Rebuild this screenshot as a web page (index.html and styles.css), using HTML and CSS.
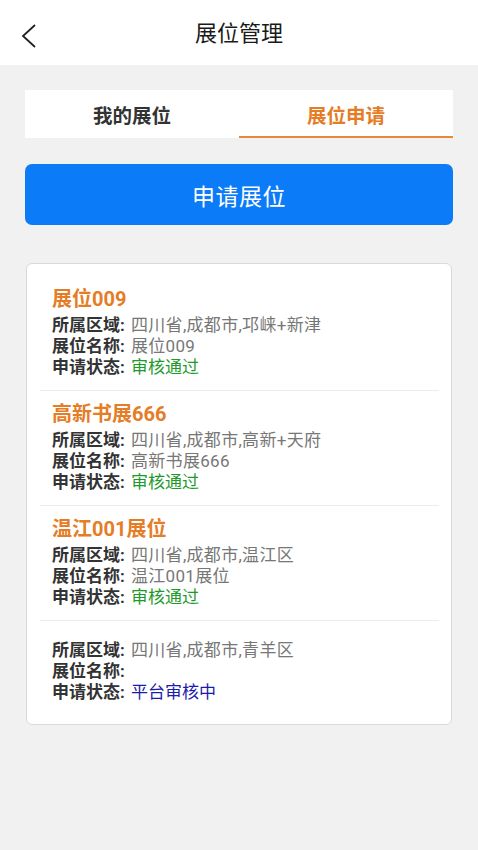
FILE: index.html
```html
<!DOCTYPE html>
<html lang="zh-CN">
<head>
<meta charset="utf-8">
<title>展位管理</title>
<link rel="stylesheet" href="styles.css">
</head>
<body>
<header class="topbar">
  <svg class="back" width="16" height="24" viewBox="0 0 16 24"><path d="M14 1 L2 12 L14 23" fill="none" stroke="#222" stroke-width="1.8"/></svg>
  <h1 class="title">展位管理</h1>
</header>
<main class="content">
  <div class="tabs">
    <div class="tab">我的展位</div>
    <div class="tab active">展位申请</div>
  </div>
  <button class="apply">申请展位</button>
  <div class="card">
    <div class="item">
      <div class="item-title">展位009</div>
      <div class="row"><b>所属区域:</b> <span class="val">四川省,成都市,邛崃+新津</span></div>
      <div class="row"><b>展位名称:</b> <span class="val">展位009</span></div>
      <div class="row"><b>申请状态:</b> <span class="ok">审核通过</span></div>
    </div>
    <div class="item">
      <div class="item-title">高新书展666</div>
      <div class="row"><b>所属区域:</b> <span class="val">四川省,成都市,高新+天府</span></div>
      <div class="row"><b>展位名称:</b> <span class="val">高新书展666</span></div>
      <div class="row"><b>申请状态:</b> <span class="ok">审核通过</span></div>
    </div>
    <div class="item">
      <div class="item-title">温江001展位</div>
      <div class="row"><b>所属区域:</b> <span class="val">四川省,成都市,温江区</span></div>
      <div class="row"><b>展位名称:</b> <span class="val">温江001展位</span></div>
      <div class="row"><b>申请状态:</b> <span class="ok">审核通过</span></div>
    </div>
    <div class="item notitle">
      <div class="row"><b>所属区域:</b> <span class="val">四川省,成都市,青羊区</span></div>
      <div class="row"><b>展位名称:</b> <span class="val"></span></div>
      <div class="row"><b>申请状态:</b> <span class="pending">平台审核中</span></div>
    </div>
  </div>
</main>
</body>
</html>
```
FILE: styles.css
```css
html, body {
  margin: 0;
  padding: 0;
}
body {
  background: #f1f1f1;
  font-family: Roboto, "Noto Sans CJK SC", sans-serif;
  width: 478px;
  height: 850px;
  color: #222;
}
.topbar {
  position: relative;
  height: 65px;
  background: #fff;
  display: flex;
  align-items: center;
  justify-content: center;
}
.back {
  position: absolute;
  left: 21px;
  top: 24px;
}
.title {
  margin: 0;
  font-size: 22px;
  font-weight: 400;
  color: #1a1a1a;
  line-height: 30px;
  padding-top: 2px;
}
.content {
  padding: 25px 25px 0 25px;
}
.tabs {
  display: flex;
  background: #fff;
  height: 48px;
}
.tab {
  flex: 1;
  display: flex;
  align-items: center;
  justify-content: center;
  font-size: 19.5px;
  font-weight: 700;
  color: #333;
  box-sizing: border-box;
}
.tab.active {
  color: #e57c26;
  border-bottom: 2px solid #e8893a;
  padding-top: 2px;
}
.apply {
  display: block;
  width: 100%;
  margin-top: 26px;
  height: 61px;
  border: none;
  border-radius: 7px;
  background: #0b7bf7;
  color: #fff;
  font-family: inherit;
  font-size: 23px;
  letter-spacing: 0.5px;
}
.card {
  margin: 38px 1px 0 1px;
  background: #fff;
  border: 1.5px solid #d9d9d9;
  border-radius: 6px;
  padding: 12px 12px 13px 13px;
}
.item {
  padding: 11px 12px 12px 12px;
  border-bottom: 1px solid #ececec;
}
.item:last-child {
  border-bottom: none;
}
.item.notitle {
  padding-top: 19px;
  padding-bottom: 8px;
}
.item-title {
  font-size: 20px;
  font-weight: 700;
  color: #e57c26;
  line-height: 25px;
  margin-bottom: 3px;
}
.row {
  font-size: 17px;
  line-height: 21px;
  white-space: nowrap;
}
.row b {
  color: #333;
  font-weight: 700;
  margin-right: 2px;
}
.val {
  color: #777;
  letter-spacing: 0.3px;
}
.ok {
  color: #1e9a2a;
}
.pending {
  color: #1c1caa;
}
```
